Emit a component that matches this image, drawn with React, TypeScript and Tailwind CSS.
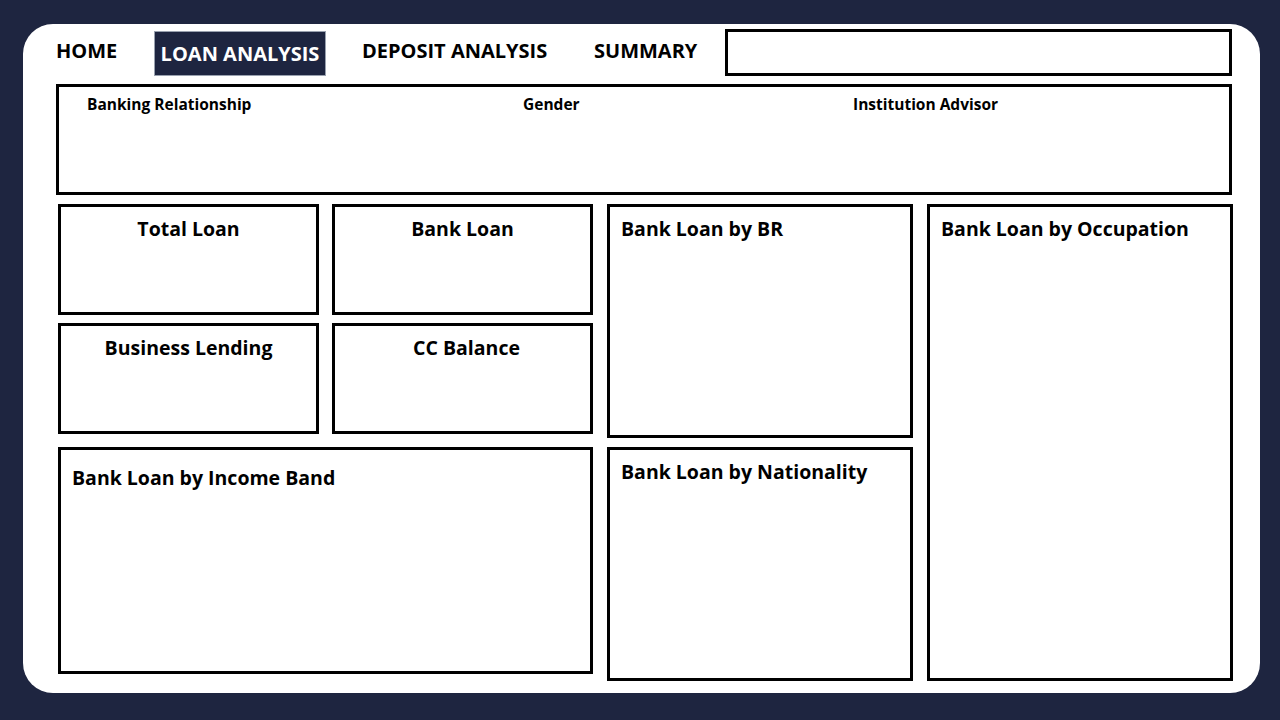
import React from 'react';

// Small wrapper for the empty report tiles
type TileProps = {
  title: string;
  center?: boolean;
  className?: string;
  titleClass?: string;
};

const Tile = ({ title, center, className, titleClass }: TileProps) => (
  <div className={`border-[3px] border-black bg-white ${className || ''}`}>
    <h2
      className={`text-[19.5px] font-bold leading-7 text-black ${center ? 'text-center pt-[8px]' : 'pl-[11px] pt-[8px]'} ${titleClass || ''}`}
    >
      {title}
    </h2>
  </div>
);

const App = () => {
  return (
    <div
      className="w-[1280px] h-[720px] bg-[#1e2540] pt-[24px] pl-[23px] pr-[20px] pb-[27px]"
      style={{ fontFamily: '"Open Sans", Lato, sans-serif' }}
    >
      <div className="h-full rounded-[30px] bg-white pl-[33px] pr-[28px] pt-[5px]">
        {/* Top navigation */}
        <nav className="flex items-center h-[47px] text-[20px] font-bold text-black">
          <span className="w-[98px] pb-[3px]">HOME</span>
          <span className="h-[45px] w-[172px] mt-[2px] flex items-center justify-center bg-[#1e2540] text-white border border-gray-400">
            LOAN ANALYSIS
          </span>
          <span className="ml-[36px] w-[232px] pb-[3px]">DEPOSIT ANALYSIS</span>
          <span className="w-[131px] pb-[3px]">SUMMARY</span>
          <div className="flex-1 h-[47px] border-[3px] border-black"></div>
        </nav>

        {/* Filters */}
        <div className="mt-[8px] h-[111px] border-[3px] border-black flex text-[15.5px] font-bold text-black pt-[6px]">
          <span className="pl-[28px] w-[464px]">Banking Relationship</span>
          <span className="w-[330px]">Gender</span>
          <span>Institution Advisor</span>
        </div>

        {/* Report tiles */}
        <div className="mt-[9px] ml-[2px] mr-[-1px] flex gap-[14px]">
          <div className="w-[535px] flex flex-col">
            <div className="grid grid-cols-2 gap-x-[13px] gap-y-[8px]">
              <Tile title="Total Loan" center className="h-[111px]" />
              <Tile title="Bank Loan" center className="h-[111px]" />
              <Tile title="Business Lending" center className="h-[111px]" titleClass="pt-[6px]" />
              <Tile title="CC Balance" center className="h-[111px]" titleClass="pt-[6px] pl-[8px]" />
            </div>
            <Tile title="Bank Loan by Income Band" className="mt-[13px] h-[227px]" titleClass="pt-[14px]" />
          </div>
          <div className="w-[306px] flex flex-col gap-[9px]">
            <Tile title="Bank Loan by BR" className="h-[234px]" />
            <Tile title="Bank Loan by Nationality" className="h-[234px]" />
          </div>
          <Tile title="Bank Loan by Occupation" className="flex-1 h-[477px]" />
        </div>
      </div>
    </div>
  );
};

export default App;
